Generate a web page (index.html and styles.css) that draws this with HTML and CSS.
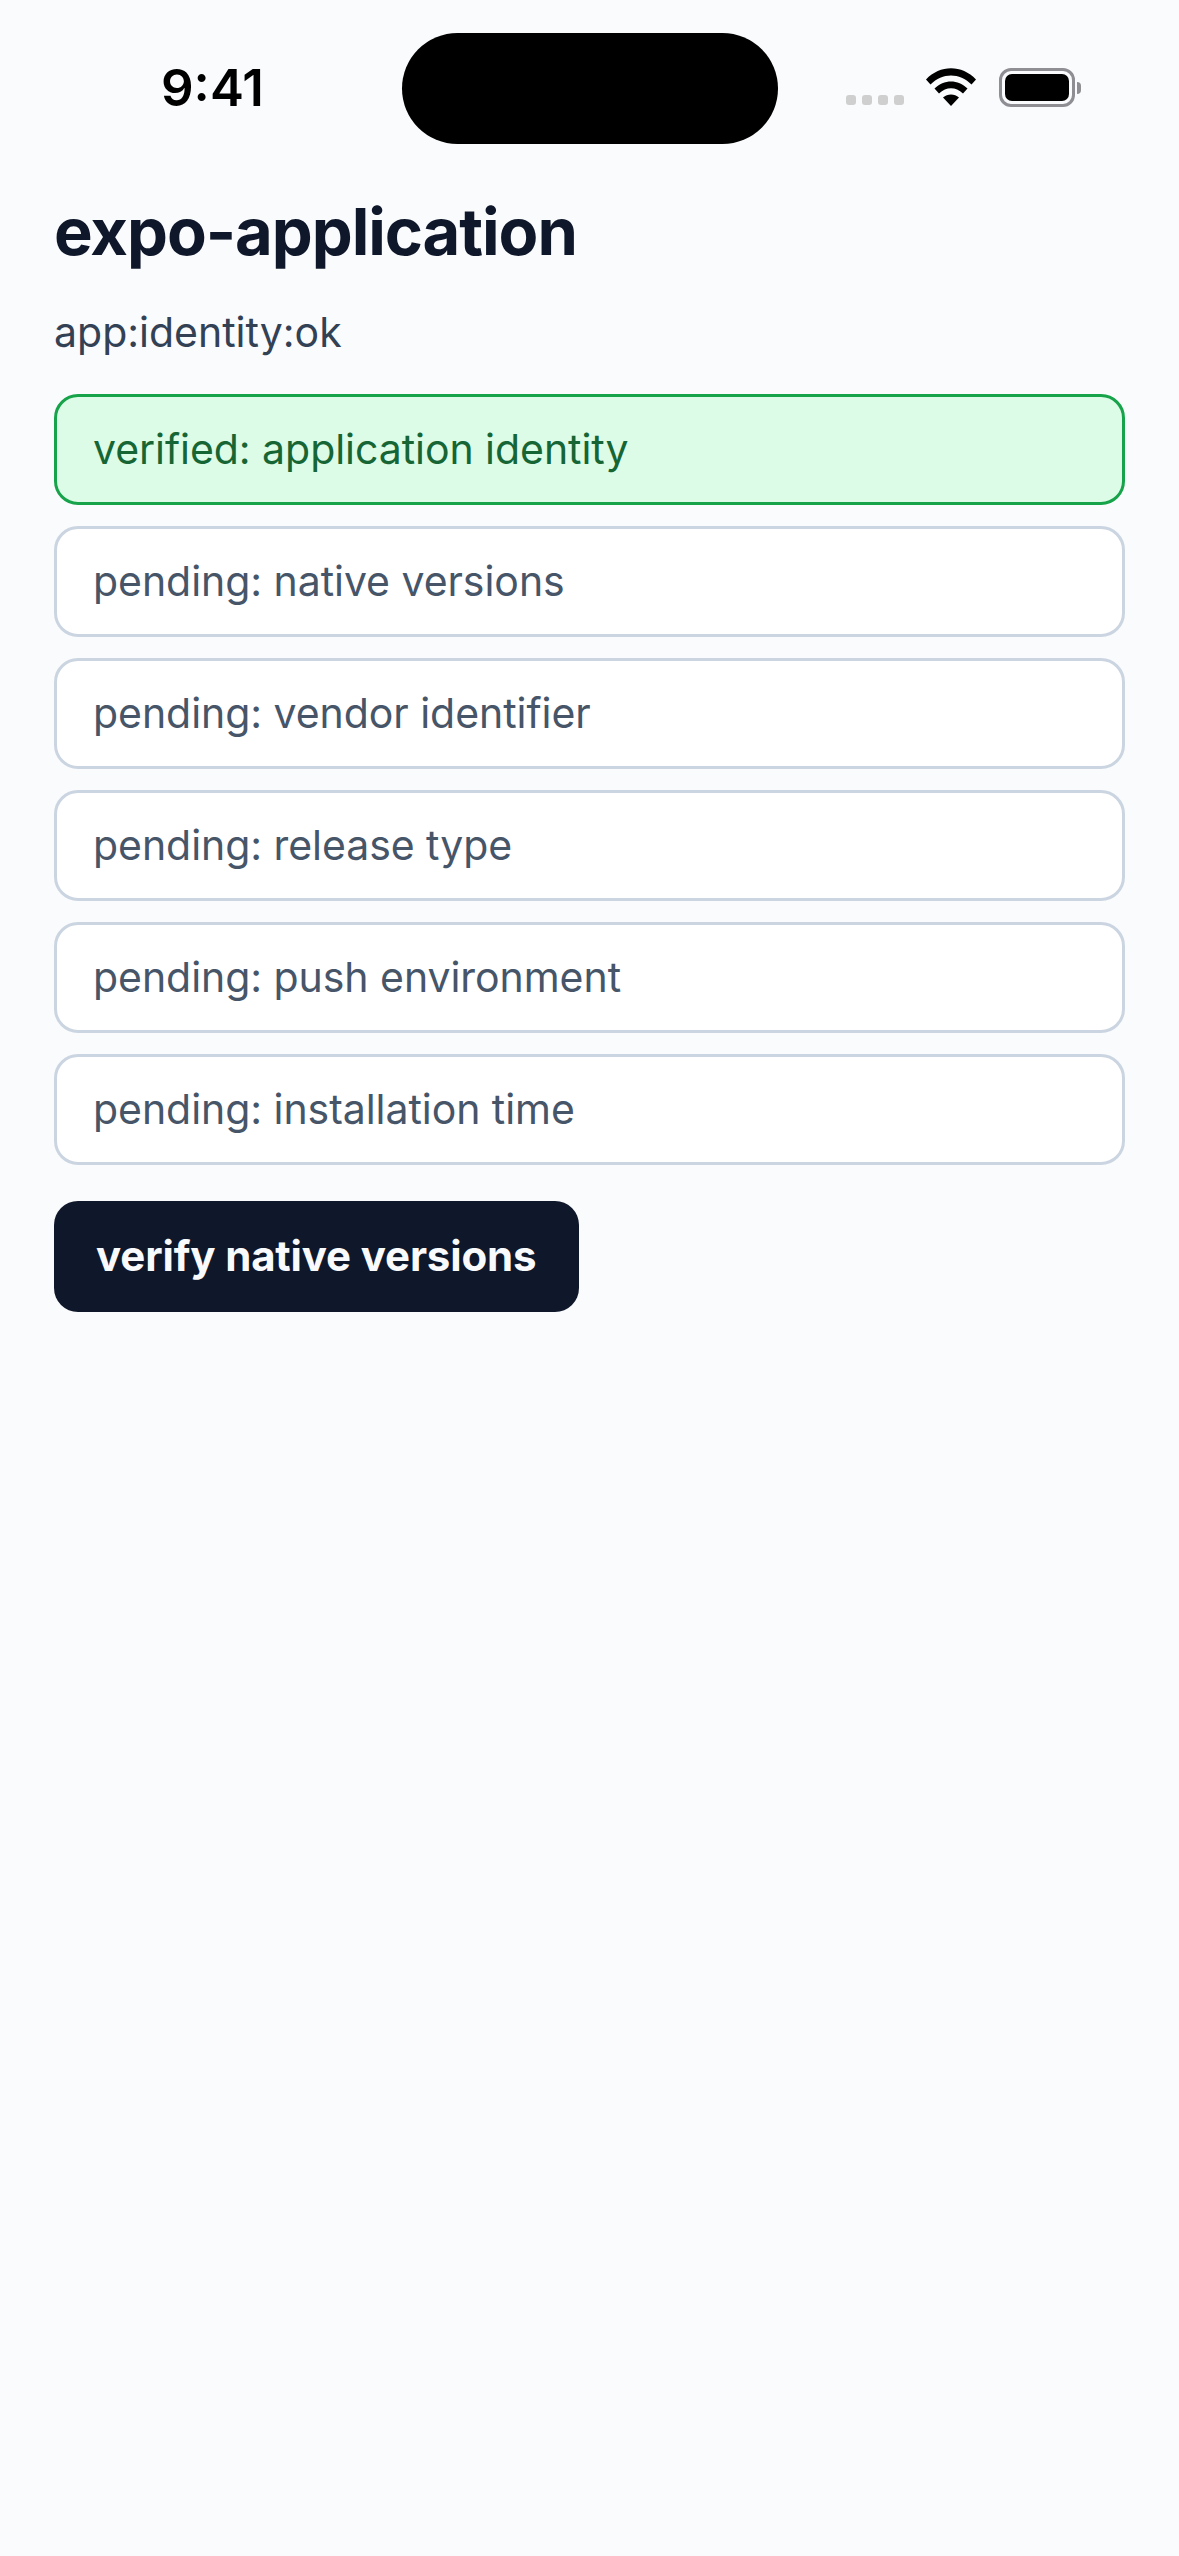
FILE: index.html
```html
<!DOCTYPE html>
<html lang="en">
<head>
  <meta charset="UTF-8">
  <meta name="viewport" content="width=device-width, initial-scale=1.0">
  <title>expo-application</title>
  <link rel="stylesheet" href="styles.css">
</head>
<body>
  <div class="status-bar">
    <div class="status-time">9:41</div>
    <div class="status-island"></div>
    <div class="status-icons">
      <div class="signal-dots">
        <span class="signal-dot"></span>
        <span class="signal-dot"></span>
        <span class="signal-dot"></span>
        <span class="signal-dot"></span>
      </div>
      <svg class="wifi-icon" viewBox="0 0 50 38" width="50" height="38">
        <path d="M0 11.5 C14 -3.5 36 -3.5 50 11.5 L45.5 16.5 C33.5 4.5 16.5 4.5 4.5 16.5 Z" fill="#000"/>
        <path d="M8.5 20.5 C18 11 32 11 41.5 20.5 L37 25.5 C29.5 18.5 20.5 18.5 13 25.5 Z" fill="#000"/>
        <path d="M17 29.5 C21.5 25.5 28.5 25.5 33 29.5 L25 38 Z" fill="#000"/>
      </svg>
      <div class="battery">
        <div class="battery-body"><div class="battery-fill"></div></div>
        <div class="battery-cap"></div>
      </div>
    </div>
  </div>

  <main class="screen">
    <h1 class="title">expo-application</h1>
    <p class="status-line">app:identity:ok</p>
    <ul class="checks">
      <li class="check verified">verified: application identity</li>
      <li class="check">pending: native versions</li>
      <li class="check">pending: vendor identifier</li>
      <li class="check">pending: release type</li>
      <li class="check">pending: push environment</li>
      <li class="check">pending: installation time</li>
    </ul>
    <button class="verify-btn">verify native versions</button>
  </main>
</body>
</html>
```

FILE: styles.css
```css
body {
  margin: 0;
  background: #fafbfd;
  font-family: Inter, "Liberation Sans", sans-serif;
  min-height: 2556px;
}

.status-bar {
  height: 192px;
  display: flex;
  align-items: flex-start;
}

.status-time {
  width: 402px;
  margin-top: 57px;
  padding-left: 161px;
  box-sizing: border-box;
  font-size: 51px;
  line-height: 62px;
  font-weight: 600;
  color: #000;
}

.status-island {
  width: 376px;
  height: 111px;
  margin-top: 33px;
  background: #000;
  border-radius: 56px;
}

.status-icons {
  display: flex;
  align-items: flex-start;
  margin-left: 68px;
  padding-top: 68px;
}

.signal-dots {
  display: flex;
  gap: 6px;
  margin-top: 27px;
  margin-right: 22px;
}

.signal-dot {
  width: 10px;
  height: 10px;
  border-radius: 3px;
  background: #cfcfcf;
}

.wifi-icon {
  display: block;
  margin-right: 23px;
}

.battery {
  display: flex;
  align-items: center;
}

.battery-body {
  width: 76px;
  height: 39px;
  box-sizing: border-box;
  border: 3px solid #8e8e93;
  border-radius: 12px;
  padding: 3px;
}

.battery-fill {
  height: 100%;
  background: #000;
  border-radius: 7px;
}

.battery-cap {
  width: 4px;
  height: 12px;
  margin-left: 2px;
  background: #8e8e93;
  border-radius: 0 4px 4px 0;
}

.screen {
  padding: 0 54px;
}

.title {
  margin: 0 0 30px;
  font-size: 65px;
  line-height: 80px;
  font-weight: 700;
  letter-spacing: -1.05px;
  color: #0f172a;
}

.status-line {
  margin: 0 0 32px;
  font-size: 41px;
  line-height: 60px;
  color: #334155;
}

.checks {
  list-style: none;
  margin: 0 0 36px;
  padding: 0;
  display: flex;
  flex-direction: column;
  gap: 21px;
}

.check {
  height: 111px;
  box-sizing: border-box;
  display: flex;
  align-items: center;
  padding: 0 36px 2px;
  background: #fff;
  border: 3px solid #cbd5e1;
  border-radius: 24px;
  font-size: 41px;
  letter-spacing: -0.05px;
  color: #475569;
}

.check.verified {
  background: #dcfce7;
  border-color: #16a34a;
  color: #166534;
}

.verify-btn {
  display: block;
  height: 111px;
  padding: 0 43px 2px 42px;
  border: 0;
  border-radius: 24px;
  background: #0f172a;
  color: #f8fafc;
  font-family: inherit;
  font-size: 42px;
  font-weight: 700;
  letter-spacing: -0.15px;
}
```
